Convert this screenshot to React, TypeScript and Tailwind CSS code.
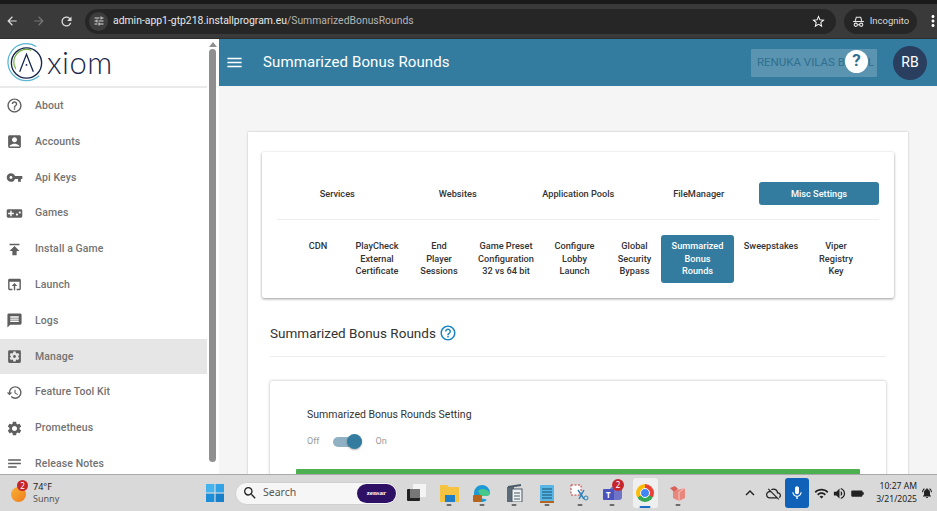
import React from "react";
import { IconType } from "react-icons";
import {
  MdAccountBox, MdArrowBack, MdArrowForward, MdHelpOutline, MdHistory, MdMenu, MdMessage, MdMic,
  MdNotes, MdOpenInBrowser, MdPublish, MdRefresh, MdSettings, MdSettingsApplications, MdStarBorder, MdTune,
  MdVideogameAsset, MdVpnKey, MdMoreVert, MdKeyboardArrowUp, MdWifi, MdVolumeUp, MdBatteryStd, MdCloudOff, MdSearch, MdNotificationsActive,
} from "react-icons/md";

const font = "font-['Roboto',sans-serif]";

const navItems: { label: string; icon: IconType; active?: boolean }[] = [
  { label: "About", icon: MdHelpOutline },
  { label: "Accounts", icon: MdAccountBox },
  { label: "Api Keys", icon: MdVpnKey },
  { label: "Games", icon: MdVideogameAsset },
  { label: "Install a Game", icon: MdPublish },
  { label: "Launch", icon: MdOpenInBrowser },
  { label: "Logs", icon: MdMessage },
  { label: "Manage", icon: MdSettingsApplications, active: true },
  { label: "Feature Tool Kit", icon: MdHistory },
  { label: "Prometheus", icon: MdSettings },
  { label: "Release Notes", icon: MdNotes },
];

const topTabs = ["Services", "Websites", "Application Pools", "FileManager", "Misc Settings"];

const subTabs: { lines: string[]; w: string; active?: boolean }[] = [
  { lines: ["CDN"], w: "w-[58px]" },
  { lines: ["PlayCheck", "External", "Certificate"], w: "w-[60px]" },
  { lines: ["End", "Player", "Sessions"], w: "w-[64px]" },
  { lines: ["Game Preset", "Configuration", "32 vs 64 bit"], w: "w-[70px]" },
  { lines: ["Configure", "Lobby", "Launch"], w: "w-[67px]" },
  { lines: ["Global", "Security", "Bypass"], w: "w-[53px]" },
  { lines: ["Summarized", "Bonus", "Rounds"], w: "w-[73px]", active: true },
  { lines: ["Sweepstakes"], w: "w-[74px]" },
  { lines: ["Viper", "Registry", "Key"], w: "w-[56px]" },
];

function BrowserBar() {
  return (
    <div className="h-[39px] shrink-0 bg-[#3a3a3a] border-b border-[#2e2e2e] flex flex-col">
      <div className="h-[4px] bg-[#1a1a1a]" />
      <div className="flex-1 flex items-center text-[#dcdcdc] font-['Roboto',sans-serif]">
        <MdArrowBack className="ml-[5px] text-[14px] shrink-0" />
        <MdArrowForward className="ml-[13px] text-[14px] text-[#777] shrink-0" />
        <MdRefresh className="ml-[13px] text-[15px] shrink-0" />
        <div className="ml-[11px] w-[751px] h-[25px] shrink-0 rounded-full bg-[#262626] flex items-center">
          <div className="ml-[4px] w-[19px] h-[19px] rounded-full bg-[#3d3d3d] flex items-center justify-center">
            <MdTune className="text-[12px]" />
          </div>
          <span className="ml-[5px] text-[10.4px] whitespace-nowrap text-[#e8e8e8]">
            admin-app1-gtp218.installprogram.eu<span className="text-[#b5b5b5]">/SummarizedBonusRounds</span>
          </span>
          <MdStarBorder className="ml-auto mr-[10px] text-[15px] text-white" />
        </div>
        <div className="ml-[8px] w-[73px] h-[25px] shrink-0 rounded-full bg-[#262626] flex items-center justify-center gap-[5px]">
          <svg viewBox="0 0 24 24" className="w-[13px] h-[13px]" fill="none" stroke="#e6e6e6" strokeWidth="2">
            <path d="M2 12h20M6 11l2-7h8l2 7" />
            <circle cx="7" cy="18" r="3" />
            <circle cx="17" cy="18" r="3" />
            <path d="M10 18h4" />
          </svg>
          <span className="text-[9.5px] text-[#d8d8d8]">Incognito</span>
        </div>
        <MdMoreVert className="ml-[7px] text-[18px] text-white shrink-0" />
      </div>
    </div>
  );
}

function Logo() {
  return (
    <div className="h-[49px] border-b-2 border-[#eaeaea] flex items-center pl-[7px] shrink-0">
      <svg viewBox="0 0 40 40" className="w-[39px] h-[40px]" fill="none">
        <path d="M30 3 A19 19 0 1 0 33 33" stroke="#5bb8d4" strokeWidth="1.3" />
        <circle cx="20" cy="20" r="15.5" stroke="#17264d" strokeWidth="1.4" />
        <path d="M9 26 A13 13 0 0 1 25 7" stroke="#6fae3f" strokeWidth="1.2" />
        <path d="M13 29 L20 11 L27 29" stroke="#17264d" strokeWidth="1.3" />
        <circle cx="20" cy="22" r="0.9" fill="#17264d" />
      </svg>
      <span className="ml-[1px] text-[31px] leading-none text-[#17264d] font-['Lato',sans-serif] font-light tracking-[0.5px]">xiom</span>
    </div>
  );
}

function Sidebar() {
  return (
    <aside className={`w-[219px] shrink-0 bg-white flex ${font}`}>
      <div className="w-[207px] flex flex-col">
        <Logo />
        {navItems.map((item) => {
          const Icon = item.icon;
          return (
            <div key={item.label} className={`h-[35.8px] shrink-0 flex items-center text-[#737373] ${item.active ? "bg-[#e6e6e6]" : ""}`}>
              <Icon className="ml-[6px] w-[17px] h-[17px] text-[#5f5f5f]" />
              <span className="ml-[12px] text-[10.5px] font-medium tracking-[0.1px] whitespace-nowrap">{item.label}</span>
            </div>
          );
        })}
      </div>
      <div className="w-[12px] bg-white flex flex-col items-center pt-[3px] pr-[1px]">
        <div className="w-0 h-0 border-x-[4px] border-x-transparent border-b-[5px] border-b-[#909090]" />
        <div className="mt-[2px] w-[7px] h-[413px] rounded-full bg-[#8f8f8f]" />
      </div>
    </aside>
  );
}

function Header() {
  return (
    <header className="h-[47px] shrink-0 bg-[#337ca0] flex items-center text-white">
      <MdMenu className="ml-[6px] text-[19px]" />
      <h1 className="ml-[19px] text-[15px] font-normal tracking-[0.1px]">Summarized Bonus Rounds</h1>
      <div className="relative ml-auto w-[126px] h-[28px] mr-[16px] bg-[#5a94b1] rounded-[1px] flex items-center pl-[6px]">
        <span className="text-[11.5px] text-[#2f6f90] whitespace-nowrap">RENUKA VILAS BAGUL</span>
        <div className="absolute left-[94px] top-[1px] w-[23px] h-[23px] rounded-full bg-white flex items-center justify-center text-[#2f6f90] text-[17px] font-bold">?</div>
      </div>
      <div className="mr-[10px] w-[34px] h-[34px] rounded-full bg-[#2a3f5f] flex items-center justify-center text-[14px]">RB</div>
    </header>
  );
}

function TabsCard() {
  return (
    <section className="mx-[14px] h-[146px] bg-white rounded-[2px] shadow-[0_1px_3px_rgba(0,0,0,0.4)] px-[15px]">
      <div className="h-[68px] flex items-center border-b border-[#eeeeee] pt-[19px] pb-[3px] text-[#333] text-[9.2px] font-medium">
        {topTabs.map((t) =>
          t === "Misc Settings" ? (
            <div key={t} className="w-[120px] h-[23px] rounded-[3px] bg-[#337ca0] text-white flex items-center justify-center">{t}</div>
          ) : (
            <div key={t} className="w-[120.5px] text-center">{t}</div>
          )
        )}
      </div>
      <div className="flex pt-[16px] pl-[12px] text-[9.2px] leading-[12.5px] font-medium text-[#333]">
        {subTabs.map((t) => (
          <div key={t.lines[0]} className={`${t.w} shrink-0 text-center`}>
            {t.active ? (
              <div className="h-[48px] -mt-[1px] pt-[5px] rounded-[3px] bg-[#337ca0] text-white">
                {t.lines.map((l) => <div key={l}>{l}</div>)}
              </div>
            ) : (
              <div className="pt-[4px]">{t.lines.map((l) => <div key={l}>{l}</div>)}</div>
            )}
          </div>
        ))}
      </div>
    </section>
  );
}

function Main() {
  return (
    <main className={`flex-1 min-w-0 flex flex-col overflow-hidden bg-[#f5f5f5] ${font}`}>
      <Header />
      <div className="flex-1 pl-[29px] pr-[29px] pt-[46px]">
        <div className="w-[660px] h-[400px] pt-[20px] bg-white shadow-[0_0_2px_rgba(0,0,0,0.25)]">
          <TabsCard />
          <div className="mx-[22px] mt-[24px] h-[35px] border-b border-[#eeeeee] flex items-start text-[#333]">
            <span className="text-[13.5px] leading-[22px]">Summarized Bonus Rounds</span>
            <MdHelpOutline className="ml-[3px] mt-[2px] text-[18px] text-[#1c86c0]" />
          </div>
          <div className="mx-[22px] mt-[24px] h-[200px] bg-white rounded-[2px] shadow-[0_0_3px_rgba(0,0,0,0.3)] pl-[26px] pr-[26px] pt-[28px]">
            <div className="pl-[11px] text-[10.5px] leading-[12px] text-[#333]">Summarized Bonus Rounds Setting</div>
            <div className="pl-[11px] mt-[14px] flex items-center text-[9px] text-[#9a9a9a]">
              <span>Off</span>
              <div className="relative ml-[14px] w-[29px] h-[10px] rounded-full bg-[#8fb1c3]">
                <div className="absolute right-0 -top-[2.5px] w-[15px] h-[15px] rounded-full bg-[#337ca0] shadow-[0_1px_2px_rgba(0,0,0,0.3)]" />
              </div>
              <span className="ml-[13px]">On</span>
            </div>
            <div className="mt-[20px] h-[30px] bg-[#4caf50] rounded-[1px]" />
          </div>
        </div>
      </div>
    </main>
  );
}

function AppCell({ children, dot = true }: { children: React.ReactNode; dot?: boolean }) {
  return (
    <div className="relative w-[32.7px] h-[36px] shrink-0 flex items-center justify-center">
      {children}
      {dot && <span className="absolute bottom-[5px] left-1/2 -translate-x-1/2 w-[5px] h-[2px] rounded-full bg-[#6a6a6a]" />}
    </div>
  );
}

function Taskbar() {
  return (
    <footer className="h-[37px] shrink-0 bg-[#d9d9d9] border-t border-[#a8a8a8] flex items-center relative z-10 font-['Noto_Sans',sans-serif] text-[#222]">
      <div className="relative ml-[11px] w-[15px] h-[15px] mt-[3px] rounded-full bg-gradient-to-br from-[#f9b233] to-[#ee7b1e]">
        <span className="absolute -top-[7px] left-[6px] w-[11px] h-[11px] rounded-full bg-[#c4262b] text-white text-[8px] leading-[11px] text-center">2</span>
      </div>
      <div className="ml-[7px] w-[45px] leading-[12px]">
        <div className="text-[9px]">74°F</div>
        <div className="text-[9px] text-[#555]">Sunny</div>
      </div>
      <svg viewBox="0 0 18 18" className="ml-[128px] w-[18px] h-[18px]">
        <rect x="0" y="0" width="8.4" height="8.4" fill="#45b4ee" />
        <rect x="9.6" y="0" width="8.4" height="8.4" fill="#2fa3e6" />
        <rect x="0" y="9.6" width="8.4" height="8.4" fill="#1d8fd8" />
        <rect x="9.6" y="9.6" width="8.4" height="8.4" fill="#1780c9" />
      </svg>
      <div className="ml-[11px] w-[163px] h-[23px] shrink-0 rounded-full bg-[#f6f6f6] border border-[#cfcfcf] flex items-center">
        <MdSearch className="ml-[6px] text-[16px] text-[#222]" />
        <span className="ml-[5px] text-[10.5px] text-[#555]">Search</span>
        <span className="ml-auto mr-[1px] w-[39px] h-[19px] rounded-full bg-[#2e1065] text-white text-[7px] font-bold flex items-center justify-center font-['Liberation_Serif',serif]">zensar</span>
      </div>
      <div className="ml-[2px] flex items-center">
        <AppCell dot={false}>
          <span className="relative w-[19px] h-[18px]">
            <span className="absolute left-[6px] top-0 w-[13px] h-[13px] bg-white/70 rounded-[1px]" />
            <span className="absolute left-0 top-[5px] w-[13px] h-[12px] bg-[#222] rounded-[1px]" />
            <span className="absolute left-[3px] top-[5px] w-[10px] h-[9px] bg-[#777]" />
          </span>
        </AppCell>
        <AppCell>
          <svg viewBox="0 0 19 18" className="w-[19px] h-[18px]"><path d="M0 1h7l2 2h10v15H0z" fill="#f5c342" /><rect x="5" y="11" width="10" height="7" fill="#1d7fc9" /></svg>
        </AppCell>
        <AppCell>
          <svg viewBox="0 0 18 18" className="w-[18px] h-[18px]"><path d="M1 9a8 8 0 0 1 16 0c0 2-2 3-5 3H7c0 2 2 3 5 3l2 1a8 8 0 0 1-13-7z" fill="#1d9ad6" /><path d="M5 7a8 8 0 0 1 12 2c0 2-2 3-5 3H8z" fill="#47c98a" /><rect x="0" y="11" width="9" height="7" rx="1" fill="#b5651d" /></svg>
        </AppCell>
        <AppCell>
          <svg viewBox="0 0 17 18" className="w-[17px] h-[18px]"><rect x="1" y="3" width="7" height="15" fill="#5b6b78" /><rect x="6" y="5" width="10" height="13" fill="#eef1f3" stroke="#4a5a66" /><path d="M8 9h6M8 12h6M8 15h6" stroke="#4a5a66" /><path d="M2 3l13-2" stroke="#4a5a66" strokeWidth="2" /></svg>
        </AppCell>
        <AppCell>
          <svg viewBox="0 0 16 19" className="w-[16px] h-[19px]"><rect x="1" y="1" width="14" height="16" rx="1" fill="#57b6e6" /><path d="M3 5h10M3 8h10M3 11h10M3 14h10" stroke="#14506f" /><rect x="1" y="17" width="14" height="2" fill="#b5651d" /></svg>
        </AppCell>
        <AppCell>
          <svg viewBox="0 0 19 18" className="w-[19px] h-[18px]" fill="none"><rect x="1" y="1" width="10" height="10" fill="#fff" stroke="#c73a3a" strokeDasharray="2 1.5" /><path d="M8 6l6 9M14 6l-5 9" stroke="#2b7fb8" strokeWidth="1.4" /><circle cx="16" cy="14" r="2" stroke="#2b7fb8" /></svg>
        </AppCell>
        <AppCell>
          <span className="relative w-[19px] h-[18px]">
            <svg viewBox="0 0 19 18" className="w-full h-full"><rect x="7" y="3" width="12" height="13" rx="3" fill="#6f74c9" /><rect x="0" y="5" width="11" height="11" rx="1" fill="#4b53bc" /></svg>
            <span className="absolute left-[3px] top-[7px] text-white text-[8px] leading-[8px] font-bold">T</span>
            <span className="absolute -top-[5px] left-[9px] w-[12px] h-[12px] rounded-full bg-[#c4262b] text-white text-[8px] leading-[12px] text-center">2</span>
          </span>
        </AppCell>
        <AppCell dot={false}>
          <span className="relative w-[25px] h-[30px] rounded-[3px] bg-[#efefef] flex items-center justify-center">
            <span className="w-[18px] h-[18px] rounded-full flex items-center justify-center bg-[conic-gradient(#ea4335_0_33%,#34a853_33%_66%,#fbbc05_66%_100%)]">
              <span className="w-[8px] h-[8px] rounded-full bg-[#4285f4] border border-white box-content" />
            </span>
            <span className="absolute bottom-0 left-1/2 -translate-x-1/2 w-[11px] h-[2px] rounded-full bg-[#1a6fc9]" />
          </span>
        </AppCell>
        <AppCell>
          <svg viewBox="0 0 17 18" className="w-[17px] h-[18px]"><path d="M8 6l8-2v10l-6 3-6-3V8z" fill="#e8877c" /><path d="M1 4l5-2 3 3-4 3z" fill="#d9635a" /><path d="M10 17V8l6-4" stroke="#f4c5bf" fill="none" /></svg>
        </AppCell>
      </div>
      <div className="ml-auto flex items-center text-[#222]">
        <MdKeyboardArrowUp className="text-[18px]" />
        <MdCloudOff className="ml-[7px] text-[15px]" />
        <div className="ml-[4px] w-[24px] h-[30px] rounded-[3px] bg-[#0f62b8] flex items-center justify-center">
          <MdMic className="text-[16px] text-white" />
        </div>
        <MdWifi className="ml-[5px] text-[15px]" />
        <MdVolumeUp className="ml-[3px] text-[15px]" />
        <MdBatteryStd className="ml-[3px] text-[15px] rotate-90" />
        <div className="ml-[11px] text-right text-[8.6px] leading-[13px]">
          <div>10:27 AM</div>
          <div>3/21/2025</div>
        </div>
        <MdNotificationsActive className="ml-[4px] mr-[4px] text-[12px]" />
      </div>
    </footer>
  );
}

export default function App() {
  return (
    <div className="w-[937px] h-[511px] flex flex-col overflow-hidden">
      <BrowserBar />
      <div className="flex-1 min-h-0 flex overflow-hidden">
        <Sidebar />
        <Main />
      </div>
      <Taskbar />
    </div>
  );
}
